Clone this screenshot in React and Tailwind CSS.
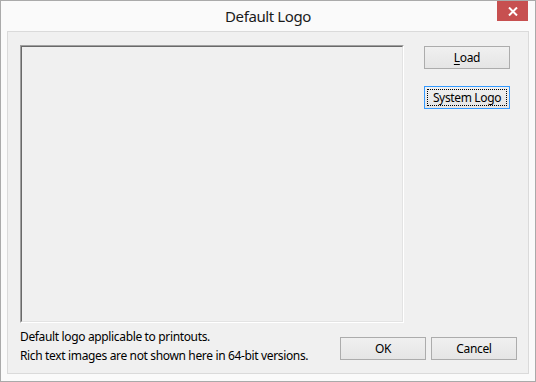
export default function App() {
  const font = { fontFamily: '"Noto Sans", "Open Sans", sans-serif' };
  const btn =
    "w-[86px] h-[23px] border border-[#acacac] bg-gradient-to-b from-[#f0f0f0] to-[#e5e5e5] flex items-center justify-center text-[12px] tracking-[-0.35px] text-black";
  return (
    <div
      className="w-[536px] h-[382px] bg-[#fafafa] border border-[#aaaaaa] flex flex-col relative overflow-hidden"
      style={font}
    >
      <div className="h-[30px] flex items-center justify-center text-[15px] tracking-[-0.4px] text-[#1a1a1a] pt-[1px]">
        Default Logo
      </div>
      <div className="absolute top-0 right-[7px] w-[31px] h-[20px] bg-[#c75050] flex items-center justify-center">
        <svg width="10" height="9" viewBox="0 0 10 9">
          <path d="M1 0.5 L9 8.5 M9 0.5 L1 8.5" stroke="white" strokeWidth="2" />
        </svg>
      </div>
      <div className="mx-[6px] mb-[7px] flex-1 border border-[#dadada] bg-[#f0f0f0] flex flex-col pl-[12px] pt-[13px] pr-[11px]">
        <div className="flex">
          <div className="w-[384px] h-[278px] border border-t-[#a0a0a0] border-l-[#a0a0a0] border-b-white border-r-white">
            <div className="w-full h-full border border-t-[#696969] border-l-[#696969] border-b-[#e3e3e3] border-r-[#e3e3e3] bg-[#f0f0f0]" />
          </div>
          <div className="ml-[20px] mt-[1px] flex flex-col gap-[17px]">
            <div className={btn}>
              <span>
                <span className="underline underline-offset-2">L</span>oad
              </span>
            </div>
            <div className="w-[86px] h-[23px] border border-[#3399ff] bg-gradient-to-b from-[#f0f0f0] to-[#e5e5e5] p-[2px]">
              <div className="w-full h-full border border-dotted border-black flex items-center justify-center text-[12px] tracking-[-0.35px] text-black">
                System Logo
              </div>
            </div>
          </div>
        </div>
        <div className="flex items-start mt-[3px]">
          <div className="flex-1 text-[12px] tracking-[-0.35px] text-black leading-[19px] pt-[1px]">
            <div>Default logo applicable to printouts.</div>
            <div>Rich text images are not shown here in 64-bit versions.</div>
          </div>
          <div className="flex gap-[5px] mt-[11px]">
            <div className={btn}>OK</div>
            <div className={btn}>Cancel</div>
          </div>
        </div>
      </div>
    </div>
  );
}
